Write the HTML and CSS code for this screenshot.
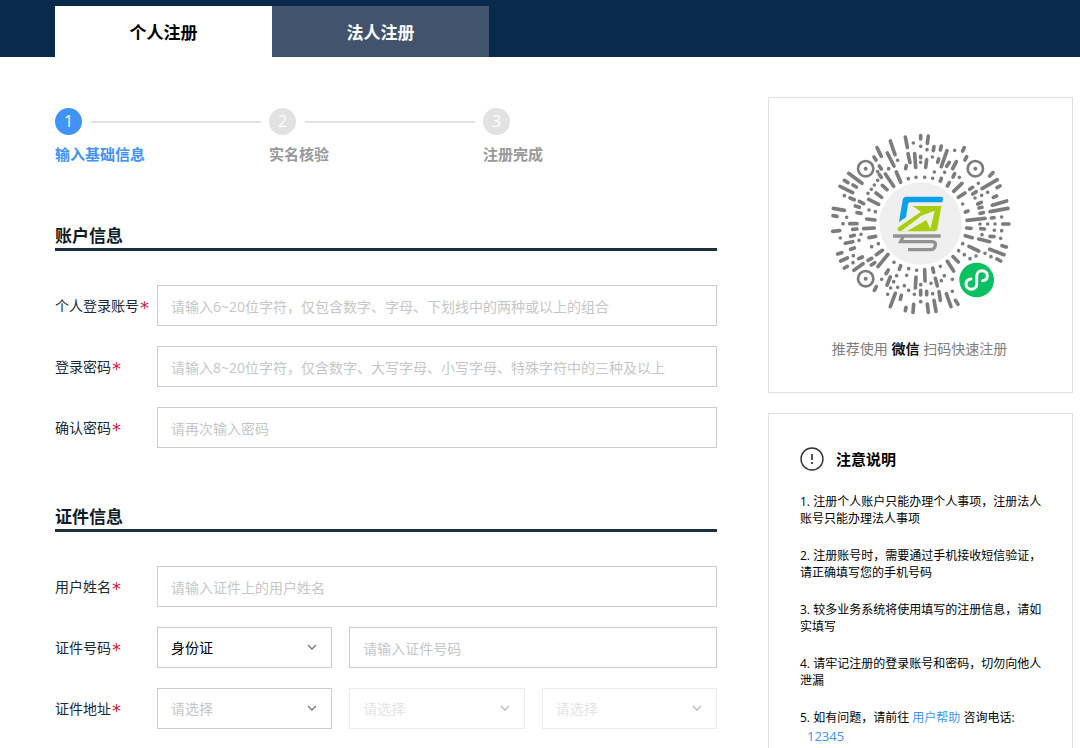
FILE: index.html
```html
<!DOCTYPE html>
<html lang="zh-CN">
<head>
    <meta charset="UTF-8">
    <title>个人注册</title>
    <link rel="stylesheet" href="styles.css">
</head>
<body>
<header class="header">
    <nav class="tabs">
        <a class="tab current" href="#">个人注册</a>
        <a class="tab" href="#">法人注册</a>
    </nav>
</header>
<div class="container">
    <main class="main">
        <!--步骤条-->
        <ol class="steps">
            <li class="step active">
                <div class="step-head"><span class="num">1</span></div>
                <p>输入基础信息</p>
            </li>
            <li class="step">
                <div class="step-head"><span class="num">2</span></div>
                <p>实名核验</p>
            </li>
            <li class="step">
                <div class="step-head"><span class="num">3</span></div>
                <p>注册完成</p>
            </li>
        </ol>
        <form class="form">
            <section class="section">
                <h2>账户信息</h2>
                <div class="row">
                    <label for="account">个人登录账号<span class="star">*</span></label>
                    <input class="field" id="account" type="text" placeholder="请输入6~20位字符，仅包含数字、字母、下划线中的两种或以上的组合">
                </div>
                <div class="row">
                    <label for="password">登录密码<span class="star">*</span></label>
                    <input class="field" id="password" type="password" placeholder="请输入8~20位字符，仅含数字、大写字母、小写字母、特殊字符中的三种及以上">
                </div>
                <div class="row">
                    <label for="confirm">确认密码<span class="star">*</span></label>
                    <input class="field" id="confirm" type="password" placeholder="请再次输入密码">
                </div>
            </section>
            <section class="section">
                <h2>证件信息</h2>
                <div class="row">
                    <label for="username">用户姓名<span class="star">*</span></label>
                    <input class="field" id="username" type="text" placeholder="请输入证件上的用户姓名">
                </div>
                <div class="row">
                    <label for="idnum">证件号码<span class="star">*</span></label>
                    <div class="group">
                        <div class="select">
                            <select class="field" aria-label="证件类型">
                                <option>身份证</option>
                            </select>
                            <svg class="arrow" viewBox="0 0 10 6"><path d="M1 1l4 4 4-4"/></svg>
                        </div>
                        <input class="field wide" id="idnum" type="text" placeholder="请输入证件号码">
                    </div>
                </div>
                <div class="row">
                    <label for="province">证件地址<span class="star">*</span></label>
                    <div class="group">
                        <div class="select empty">
                            <select class="field" id="province">
                                <option>请选择</option>
                            </select>
                            <svg class="arrow" viewBox="0 0 10 6"><path d="M1 1l4 4 4-4"/></svg>
                        </div>
                        <div class="select empty disabled">
                            <select class="field" aria-label="城市" disabled>
                                <option>请选择</option>
                            </select>
                            <svg class="arrow" viewBox="0 0 10 6"><path d="M1 1l4 4 4-4"/></svg>
                        </div>
                        <div class="select empty disabled">
                            <select class="field" aria-label="区县" disabled>
                                <option>请选择</option>
                            </select>
                            <svg class="arrow" viewBox="0 0 10 6"><path d="M1 1l4 4 4-4"/></svg>
                        </div>
                    </div>
                </div>
            </section>
        </form>
    </main>
    <aside class="side">
        <div class="card scan">
            <svg class="qrcode" viewBox="0 0 600 600" role="img" aria-label="小程序码">
                <!--放射状码点-->
                <g fill="none" stroke="#7b7c7c" stroke-width="11" stroke-linecap="round">
                    <path d="M171 71L184 97M211 51L225 92M256 39L262 70M280 57h0M302 35V45M325 36L322 58M302 67h0M321 77h0M342 68L340 80M364 66L361 78M404 79h0M433 71L428 81"/>
                    <path d="M162 99L168 108M202 87L222 126M233 109h0M264 89L270 116M259 125L257 134M284 89L287 130M302 97V101M302 115h0M320 107L317 130M337 99h0M356 105L353 115M381 80L364 128M388 115L380 127M409 113L398 134M440 98L435 108"/>
                    <path d="M343 144h0M374 145h0M314 160h0M338 163h0M364 163L361 171M404 149L399 159M418 160h0M388 176L382 186M519 146L509 156M532 167L486 194M540 186L531 191M426 178L401 202M475 178h0M458 190L449 196M435 207L415 220M503 205h0M469 203L458 210M485 214h0M465 222h0M530 216L520 220"/>
                    <path d="M560 231L517 244M428 240h0M484 235L473 240M486 250L477 252M564 253L510 263M444 261L436 264M490 266L480 268M495 283L441 289M522 281L514 282M545 279h0M480 300h0M503 300h0M525 300h0M548 300H567"/>
                    <path d="M86 148L126 178M60 187L98 206M73 169L84 176M99 183L109 189M178 126L184 135M206 134h0M173 143h0M178 152L184 160M173 169h0M163 183h0M154 196h0M144 208h0M196 150L221 187M229 144L242 175M265 164h0M288 160h0M187 184L201 197M168 207L185 220M146 226L176 241"/>
                    <path d="M73 215h0M90 222L103 227M118 232L131 239M106 246L118 250M147 258h0M166 263h0M40 253L73 259M39 275L51 277M80 280h0M111 266L123 268M140 285L165 288M69 299h0M89 299H111"/>
                    <path d="M38 322L59 320M61 342h0M98 316L111 315M123 331h0M131 314L163 312M92 337L103 334M117 349h0M76 358L98 353M147 341L167 337M92 376L103 372M100 395h0M155 368h0M175 359h0M169 392L187 379M53 390L65 386M62 411L82 402M116 404L127 399M99 416h0M73 432L82 427M102 439L129 419M144 409L155 403M154 423L164 416M174 428L204 391"/>
                    <path d="M222 415h0M242 425L238 436M266 434h0M290 439h0M169 488L163 499M185 466h0M205 438L198 449M211 459L201 483M230 455h0M260 454h0M221 473h0M212 492h0M233 490h0M253 485h0M203 511h0M266 499h0M226 508L211 548M244 514L241 526M258 550L256 560M281 541L279 565M283 511h0M288 459L286 492"/>
                    <path d="M314 437L315 471M338 432L341 445M361 427h0M382 412L401 441M399 398L415 414M346 463L352 486M373 455h0M397 466h0M364 470h0M333 478h0M302 482h0M320 502V512M338 509h0M357 503L361 529M302 499V513M302 533h0M379 509L393 548M397 502h0M406 529L414 541M322 540L325 565M342 529L348 562"/>
                    <path d="M416 380h0M433 392h0M450 404h0M468 396h0M428 359h0M447 367L476 381M436 335L457 341M440 312L453 313M482 314L493 315M476 345L509 353M486 332h0M509 376L552 392M523 319h0M510 337L522 338M545 320h0M542 343h0M546 365L559 369M531 405L542 411M495 388h0M513 398h0"/>
                </g>
                <g fill="none" stroke="#7b7c7c" stroke-width="8">
                    <circle cx="137" cy="134" r="23"/>
                    <circle cx="466" cy="134" r="23"/>
                    <circle cx="137" cy="464" r="23"/>
                </g>
                <g fill="#7b7c7c">
                    <circle cx="137" cy="134" r="6"/>
                    <circle cx="466" cy="134" r="6"/>
                    <circle cx="137" cy="464" r="6"/>
                </g>
                <!--中间logo-->
                <circle cx="302" cy="299" r="124" fill="#efefef"/>
                <path fill="#0aa0ea" d="M259 218H364Q370 218 369 224L367 235H270Q265 235 264 241L258 280L237 294L248 227Q250 218 259 218Z"/>
                <path fill="#a9cf0c" d="M278 246H364L352 315Q350 322 343 322H240Q232 322 233 311L303 263Z"/>
                <path fill="#efefef" d="M243 322H261L319 288L331 315L344 260L302 276L292 285Z"/>
                <g fill="none" stroke="#929292" stroke-width="10">
                    <path d="M219 336H362"/>
                    <path d="M250 337L242 353H337Q348 353 346 364Q344 377 332 377H264"/>
                </g>
                <!--小程序标志-->
                <circle cx="470" cy="468" r="52" fill="#09c160"/>
                <path fill="none" stroke="#fff" stroke-width="9" stroke-linecap="round" d="M453 465C444 466 438 472 438 480C438 489 445 496 454 496C463 496 470 489 470 480V456C470 447 477 440 486 440C495 440 502 447 502 455C502 463 496 469 488 470"/>
            </svg>
            <p>推荐使用 <b>微信</b> 扫码快速注册</p>
        </div>
        <div class="card notice">
            <h3>
                <svg class="icon" viewBox="0 0 24 24">
                    <circle cx="12" cy="12" r="11" fill="none" stroke="#333" stroke-width="1.4"/>
                    <path d="M12 7v6M12 15v2" fill="none" stroke="#555" stroke-width="2"/>
                </svg>
                注意说明
            </h3>
            <p>1. 注册个人账户只能办理个人事项，注册法人账号只能办理法人事项</p>
            <p>2. 注册账号时，需要通过手机接收短信验证，请正确填写您的手机号码</p>
            <p>3. 较多业务系统将使用填写的注册信息，请如实填写</p>
            <p>4. 请牢记注册的登录账号和密码，切勿向他人泄漏</p>
            <p>5. 如有问题，请前往 <a href="#">用户帮助</a> 咨询电话: <a class="tel" href="tel:12345">12345</a></p>
        </div>
    </aside>
</div>
</body>
</html>
```

FILE: styles.css
```css
* {
    margin: 0;
    padding: 0;
    box-sizing: border-box;
}

body {
    font-family: "Open Sans", "Noto Sans CJK SC", sans-serif;
    font-size: 14px;
    line-height: 20px;
    color: #000;
    background-color: #fff;
}

ol {
    list-style: none;
}

a {
    color: #4293f7;
    text-decoration: none;
}

.header {
    padding: 6px 55px 0;
    background-color: #0a2a4d;
}

.tabs {
    display: flex;
}

.tab {
    width: 217px;
    height: 51px;
    line-height: 53px;
    font-size: 17px;
    font-weight: bold;
    text-align: center;
    color: #fff;
    background-color: #41536d;
}

.tab.current {
    color: #000;
    background-color: #fff;
}

.container {
    display: grid;
    grid-template-columns: minmax(0, 1fr) 305px;
    gap: 51px;
    align-items: start;
    padding: 40px 7px 40px 55px;
}

/*步骤条*/
.steps {
    display: flex;
    padding-top: 11px;
    margin-bottom: 60px;
}

.step {
    width: 214px;
    color: #999;
    font-size: 15px;
    font-weight: bold;
}

.step-head {
    display: flex;
    align-items: center;
    gap: 9px;
    margin-bottom: 9px;
}

.step-head::after {
    content: "";
    flex: 1;
    height: 2px;
    margin-right: 8px;
    background-color: #e2e2e2;
}

.step:last-child .step-head::after {
    display: none;
}

.num {
    width: 27px;
    height: 27px;
    line-height: 27px;
    border-radius: 50%;
    text-align: center;
    font-size: 16px;
    font-weight: normal;
    color: #fff;
    background-color: #e2e2e2;
}

.active {
    color: #4293f7;
}

.active .num {
    background-color: #4293f7;
}

/*表单*/
.section {
    display: grid;
    gap: 20px;
    margin-bottom: 57px;
}

.section h2 {
    margin-bottom: 14px;
    border-bottom: 3px solid #1c2f3e;
    line-height: 24px;
    font-size: 17px;
    color: #0d1c28;
}

.row {
    display: grid;
    grid-template-columns: 102px minmax(0, 1fr);
    align-items: center;
}

.row label {
    display: flex;
    align-items: center;
    color: #1a2a38;
}

.star {
    padding: 4px 0 0 1px;
    font-family: "DejaVu Sans", sans-serif;
    font-size: 18px;
    color: #c8193c;
}

.field {
    width: 100%;
    height: 41px;
    padding: 1px 13px 0;
    border: 1px solid #ccc;
    border-radius: 0;
    font: inherit;
    color: #000;
    background-color: #fff;
    appearance: none;
    outline: none;
}

.field::placeholder {
    color: #c6c6c6;
    opacity: 1;
}

.group {
    display: grid;
    grid-template-columns: repeat(3, minmax(0, 1fr));
    gap: 17px;
}

.wide {
    grid-column: span 2;
}

.select {
    position: relative;
}

.arrow {
    position: absolute;
    top: 17px;
    right: 15px;
    width: 10px;
    height: 6px;
    fill: none;
    stroke: #777;
    stroke-width: 1.3;
    pointer-events: none;
}

.empty .field {
    color: #c6c6c6;
}

.disabled .field {
    border-color: #ebebeb;
    color: #e4e4e4;
    opacity: 1;
}

.disabled .arrow {
    stroke: #bbb;
}

/*右侧*/
.side {
    display: grid;
    gap: 20px;
}

.card {
    border: 1px solid #dfdfdf;
}

.scan {
    padding: 26px 2px 33px 0;
    text-align: center;
    color: #808080;
}

.scan b {
    color: #111;
}

.qrcode {
    display: block;
    width: 200px;
    height: 200px;
    margin: 0 auto 15px;
}

.notice {
    padding: 33px 26px 10px 31px;
    font-size: 12px;
    line-height: 17px;
}

.notice h3 {
    display: flex;
    align-items: center;
    gap: 12px;
    margin-bottom: 22px;
    line-height: 24px;
    font-size: 15px;
}

.icon {
    width: 24px;
    height: 24px;
}

.notice p {
    margin-bottom: 20px;
}

.tel {
    display: block;
    padding-left: 7px;
    font-size: 13px;
    line-height: 21px;
}
```
